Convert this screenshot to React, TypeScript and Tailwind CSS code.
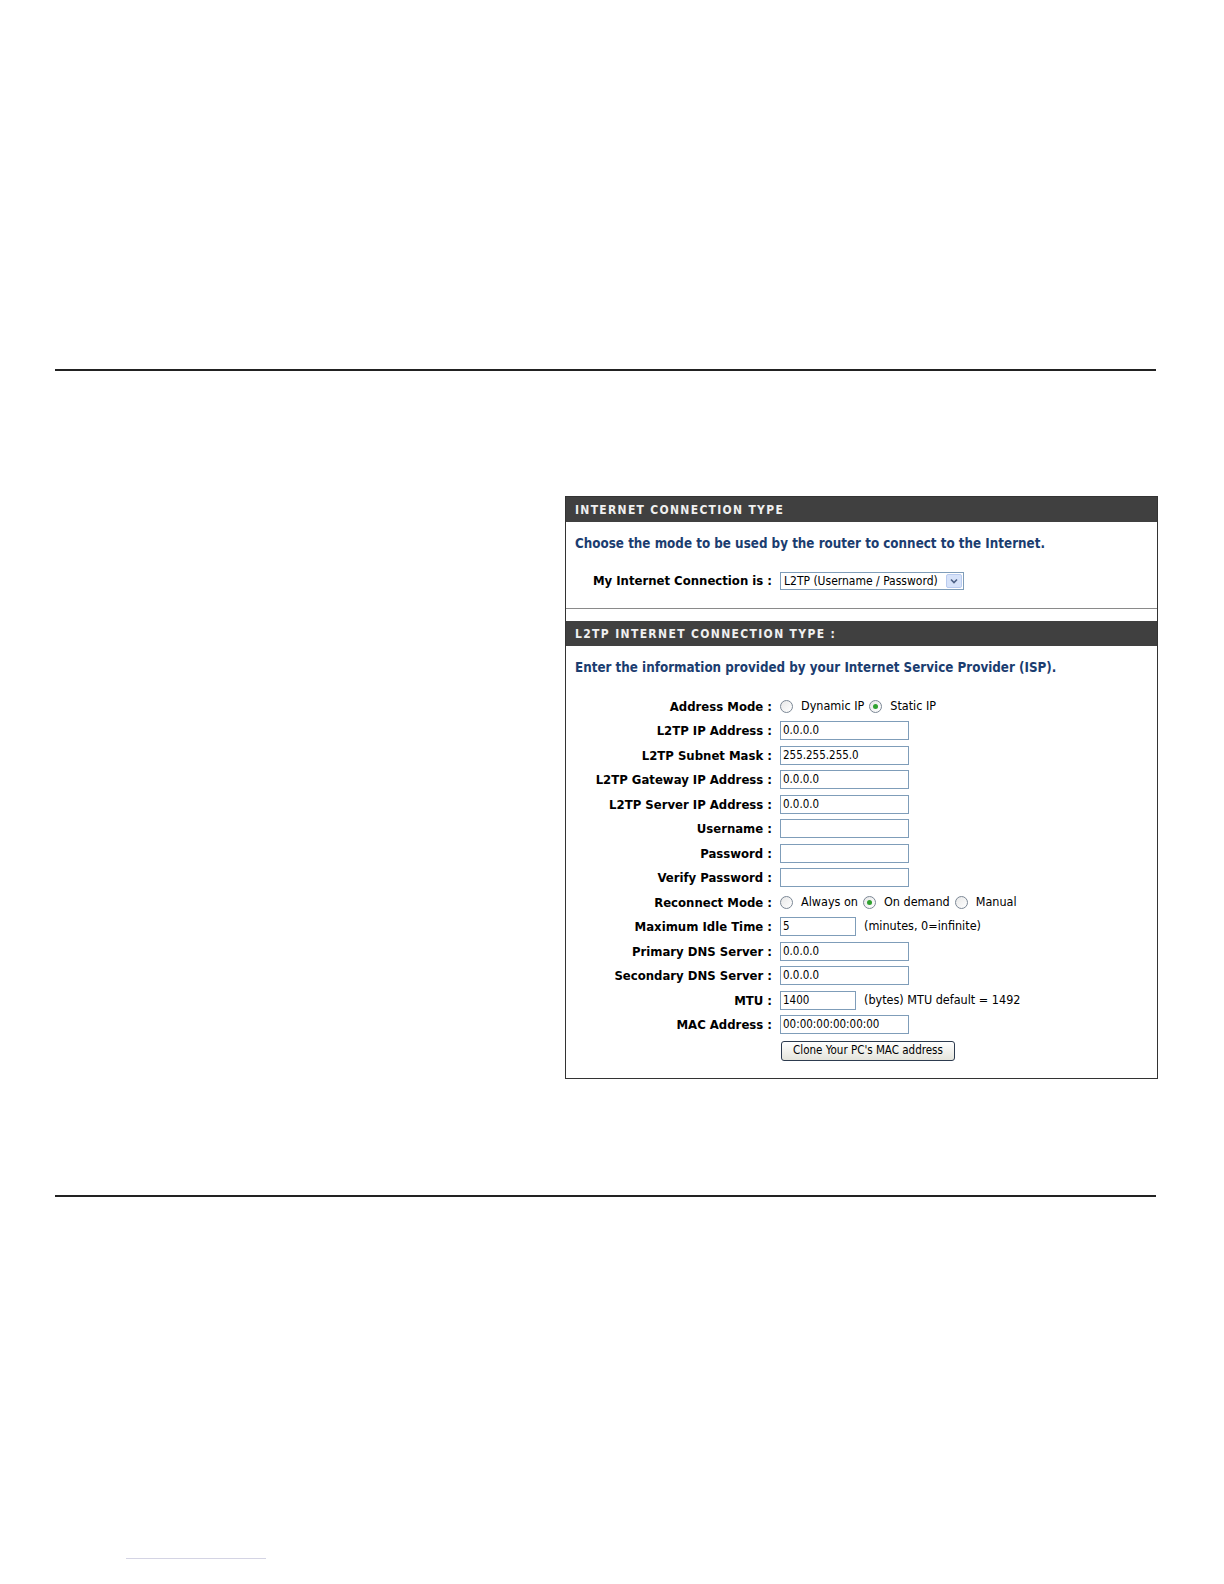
import React from 'react'

const font = "font-['DejaVu_Sans_Condensed','DejaVu_Sans',sans-serif]"

function Radio({ checked }: { checked?: boolean }) {
  return (
    <span className="inline-flex h-[13px] w-[13px] items-center justify-center rounded-full border border-[#7b8795] bg-gradient-to-br from-[#e8e8e8] to-white">
      {checked && <span className="h-[5px] w-[5px] rounded-full bg-[#2fa12f]" />}
    </span>
  )
}

function Field({ value = '', short }: { value?: string; short?: boolean }) {
  return (
    <div
      className={`flex h-[19px] items-center border border-[#7f9db9] bg-white px-[2px] text-[11.5px] text-black ${
        short ? 'w-[76px]' : 'w-[129px]'
      }`}
    >
      {value}
    </div>
  )
}

function Row({ label, children }: { label: string; children: React.ReactNode }) {
  return (
    <div className="flex h-[24.5px] items-center">
      <div className="w-[207px] pr-[1px] text-right text-[13px] font-bold text-black">{label} :</div>
      <div className="ml-[7px] flex items-center text-[12.5px] text-black">{children}</div>
    </div>
  )
}

const fields: { label: string; value?: string; short?: boolean; note?: string }[] = [
  { label: 'L2TP IP Address', value: '0.0.0.0' },
  { label: 'L2TP Subnet Mask', value: '255.255.255.0' },
  { label: 'L2TP Gateway IP Address', value: '0.0.0.0' },
  { label: 'L2TP Server IP Address', value: '0.0.0.0' },
  { label: 'Username' },
  { label: 'Password' },
  { label: 'Verify Password' },
]

const fields2: { label: string; value?: string; short?: boolean; note?: string }[] = [
  { label: 'Maximum Idle Time', value: '5', short: true, note: '(minutes, 0=infinite)' },
  { label: 'Primary DNS Server', value: '0.0.0.0' },
  { label: 'Secondary DNS Server', value: '0.0.0.0' },
  { label: 'MTU', value: '1400', short: true, note: '(bytes) MTU default = 1492' },
  { label: 'MAC Address', value: '00:00:00:00:00:00' },
]

export default function App() {
  return (
    <div className={`h-[1584px] w-[1224px] bg-white ${font}`}>
      <div className="px-[55px] pt-[369px]">
        <div className="h-[2px] w-[1101px] bg-[#222]" />

        <div className="ml-[510px] mt-[125px] w-[593px] border border-[#333] bg-white">
          <div className="flex h-[25px] items-center bg-[#404040] px-[9px] text-[12px] font-bold tracking-[1.3px] text-[#f0f0f0]">
            INTERNET CONNECTION TYPE
          </div>
          <div className="border-b border-[#8a8a8a] pb-[10px]">
            <div className="flex h-[42px] items-center px-[9px] pt-[2px] text-[13.3px] font-bold text-[#1b3d70]">
              Choose the mode to be used by the router to connect to the Internet.
            </div>
            <div className="flex h-[34px] items-center">
              <div className="w-[207px] pr-[1px] text-right text-[13px] font-bold text-black">
                My Internet Connection is :
              </div>
              <div className="ml-[7px] flex h-[18px] w-[184px] items-center border border-[#7f9db9] bg-white pl-[3px] text-[12px] text-black">
                <span className="flex-1">L2TP (Username / Password)</span>
                <span className="mr-[1px] flex h-[14px] w-[16px] items-center justify-center rounded-[2px] border border-[#b9cbef] bg-[#d6e2f9]">
                  <svg width="8" height="6" viewBox="0 0 8 6">
                    <path d="M1 1.5 L4 4.5 L7 1.5" fill="none" stroke="#4d6185" strokeWidth="1.6" />
                  </svg>
                </span>
              </div>
            </div>
          </div>
          <div className="h-[12px]" />
          <div className="flex h-[25px] items-center bg-[#404040] px-[9px] text-[12px] font-bold tracking-[1.35px] text-[#f0f0f0]">
            L2TP INTERNET CONNECTION TYPE :
          </div>
          <div className="flex h-[42px] items-center px-[9px] pt-[1px] text-[13.3px] font-bold text-[#1b3d70]">
            Enter the information provided by your Internet Service Provider (ISP).
          </div>
          <div className="pb-[14px] pt-[6px]">
            <Row label="Address Mode">
              <Radio />
              <span className="ml-[8px] mr-[5px]">Dynamic IP</span>
              <Radio checked />
              <span className="ml-[8px]">Static IP</span>
            </Row>
            {fields.map((f) => (
              <Row key={f.label} label={f.label}>
                <Field value={f.value} short={f.short} />
              </Row>
            ))}
            <Row label="Reconnect Mode">
              <Radio />
              <span className="ml-[8px] mr-[5px]">Always on</span>
              <Radio checked />
              <span className="ml-[8px] mr-[5px]">On demand</span>
              <Radio />
              <span className="ml-[8px]">Manual</span>
            </Row>
            {fields2.map((f) => (
              <Row key={f.label} label={f.label}>
                <Field value={f.value} short={f.short} />
                {f.note && <span className="ml-[8px]">{f.note}</span>}
              </Row>
            ))}
            <div className="flex h-[27px] items-center pl-[215px]">
              <button className="flex h-[20px] w-[174px] items-center justify-center rounded-[3px] border border-[#2d3b4f] bg-gradient-to-b from-white to-[#e4e4dc] text-[11.5px] text-black">
                Clone Your PC's MAC address
              </button>
            </div>
          </div>
        </div>

        <div className="mt-[116px] h-[2px] w-[1101px] bg-[#222]" />

        <div className="ml-[71px] mt-[361px] h-px w-[140px] bg-[#d4d4e4]" />
      </div>
    </div>
  )
}
